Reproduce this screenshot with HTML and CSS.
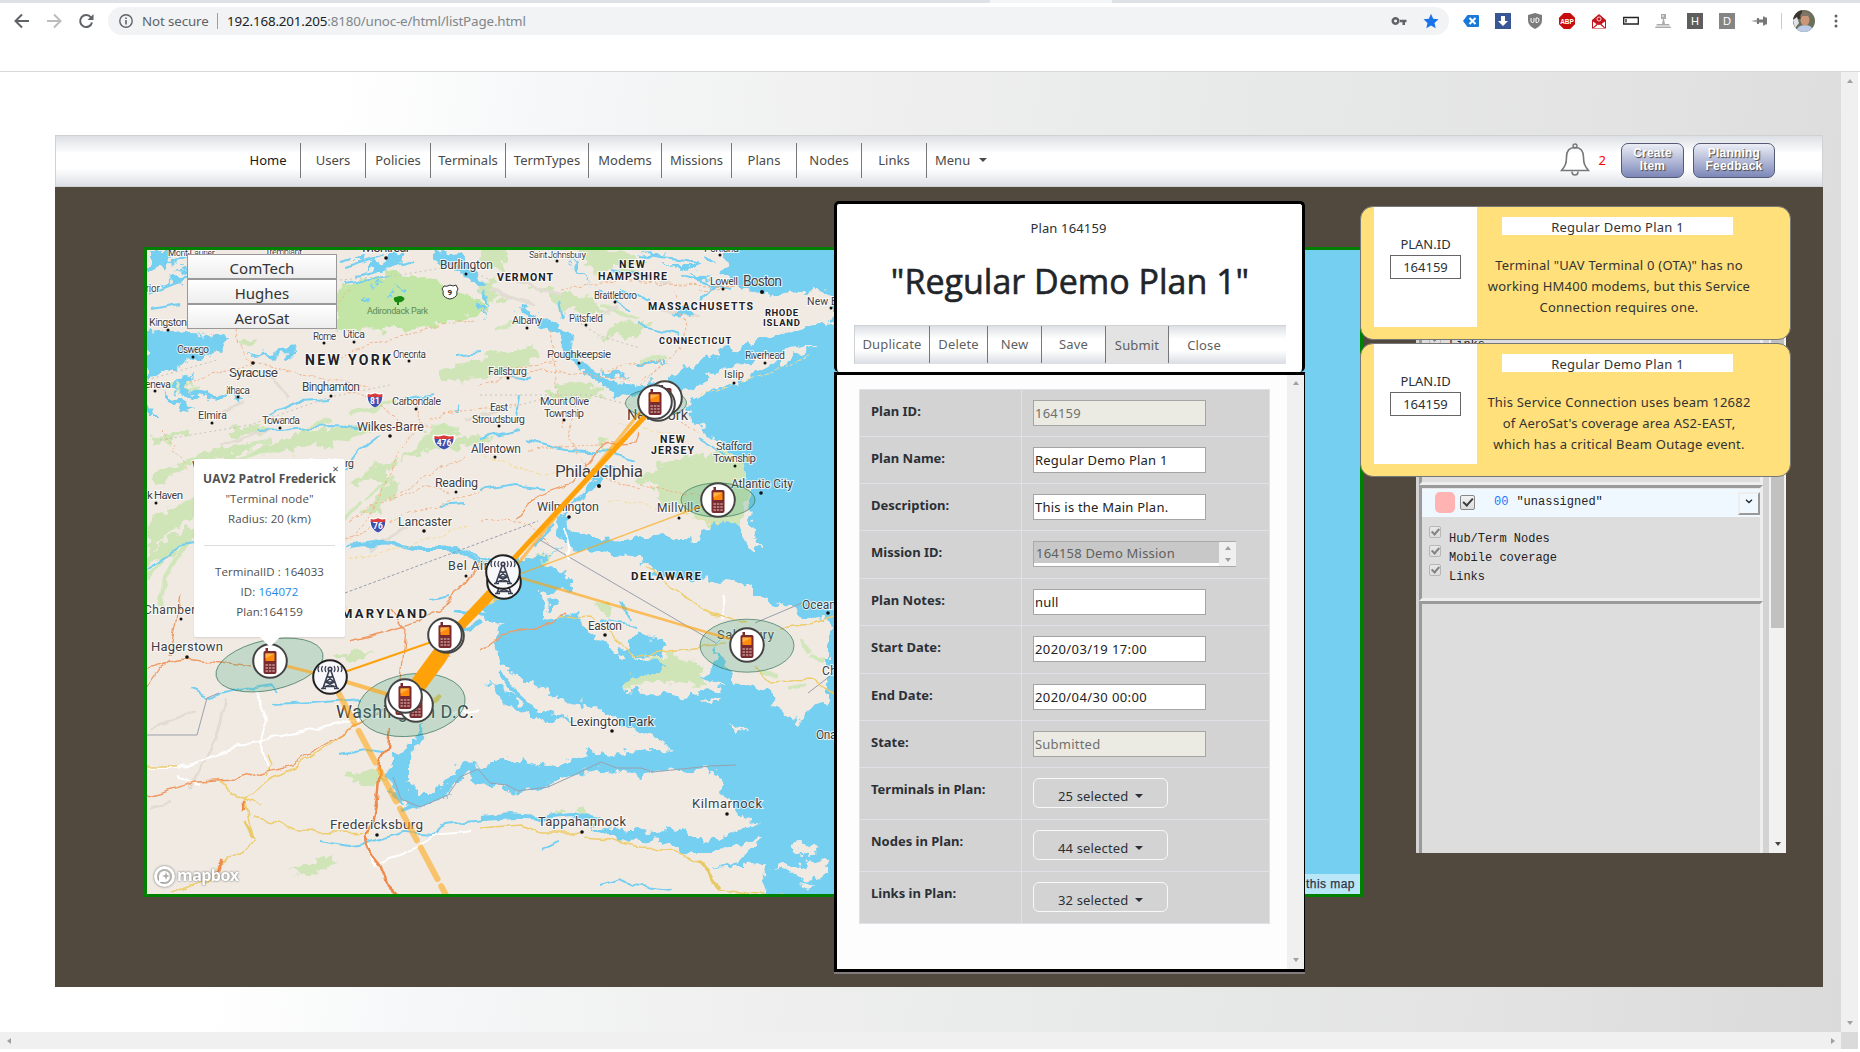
FILE: index.html
```html
<!DOCTYPE html>
<html lang="en">
<head>
<meta charset="utf-8">
<title>UNOC-E Plans</title>
<link rel="stylesheet" href="styles.css">
</head>
<body>
<header class="browser">
  <div class="tabstrip"><span class="tab-active"></span></div>
  <div class="toolbar">
    <svg class="tb-nav" width="108" height="28" viewBox="0 7 108 28" fill="none" stroke-width="2">
      <path d="M29 21H16M22 14.5L15.500 21l6.500 6.500" stroke="#5f6368"/>
      <path d="M47 21h13M54 14.500l6.500 6.500-6.500 6.500" stroke="#babcbe"/>
      <path d="M91 17.500a6 6 0 1 0 1 5" stroke="#5f6368"/><path d="M93.500 14v6h-6z" fill="#5f6368"/>
    </svg>
    <div class="omnibox">
      <svg width="14" height="14" viewBox="0 0 14 14"><circle cx="7" cy="7" r="6.200" fill="none" stroke="#5f6368" stroke-width="1.400"/><path d="M6.200 6h1.600v4.500H6.200zM6.200 3.500h1.600V5H6.200z" fill="#5f6368"/></svg>
      <span class="secure">Not secure</span><span class="vsep"></span>
      <span class="url"><b>192.168.201.205</b>:8180/unoc-e/html/listPage.html</span>
      <span class="omni-icons">
        <svg width="16" height="16" viewBox="0 0 16 16"><path fill="#5f6368" fill-rule="evenodd" d="M5 4a4 4 0 1 1-1 .01zM4.500 6.500a1.500 1.500 0 1 0 .1 0zM8 6.700h7.500v2.600H14V12h-2.500V9.300H8z"/></svg>
        <svg width="16" height="16" viewBox="0 0 16 16"><path fill="#1a73e8" d="M8 .8l2.200 5 5.300.5-4 3.600 1.200 5.300L8 12.400l-4.700 2.800 1.200-5.300-4-3.600 5.300-.5z"/></svg>
      </span>
    </div>
    <div class="extensions">
      <svg viewBox="0 0 16 16"><path fill="#1a79d8" d="M4.500 2H15q1 0 1 1v10q0 1-1 1H4.500L0 8z"/><path stroke="#fff" stroke-width="2" d="M6.500 5l6 6m0-6l-6 6"/></svg>
      <svg viewBox="0 0 16 16"><path fill="#3a5795" d="M0 0h16v16H0z"/><path fill="#fff" d="M6 3h4v5h3l-5 5-5-5h3z"/></svg>
      <svg viewBox="0 0 16 16"><path fill="#7b7b7b" d="M8 0l7 2v5q0 6-7 9-7-3-7-9V2z"/><path fill="none" stroke="#fff" d="M4 5v3q0 1.500 1.500 1.500T7 8V5M9 5v4.500h1.500Q12 9 12 7t-1.500-2z"/></svg>
      <svg viewBox="0 0 16 16"><path fill="#c70d0d" d="M4.800 0h6.400L16 4.800v6.400L11.200 16H4.800L0 11.200V4.800z"/><text x="8" y="11" class="abp">ABP</text></svg>
      <svg viewBox="0 0 16 16"><path fill="#c4161c" d="M8 1l7 6v8.500H1V7z"/><path fill="#fff" d="M2 8.500L5.500 11 2 14.500zM14 8.500L10.500 11l3.500 3.500zM7 11.500l1 .7 1-.7 4 3.500H3z"/><circle cx="8" cy="6" r="2" fill="none" stroke="#fff" stroke-width=".8"/></svg>
      <svg viewBox="0 0 16 16"><path fill="#fff" stroke="#222" stroke-width="1.300" d="M.7 4.500h14.600v6.500H.7zM3 6v3.500"/></svg>
      <svg viewBox="0 0 16 16"><path fill="#aaa" d="M6 1h5v5H9l1 5H7l1-5H6zM2 11h12l2 4H0z"/><path stroke="#fff" d="M1 13h14M7 3h2"/></svg>
      <i class="key">H</i>
      <i class="key light">D</i>
      <svg viewBox="0 0 16 16"><path fill="#aaa" d="M0 8l6-1.500v3z"/><path fill="#777" d="M6 5h2v1.500h4V3.500h1.500l.5 1h2v7h-2l-.5 1H12v-3H8V11H6z"/></svg>
    </div>
    <span class="vsep tall"></span>
    <svg class="avatar" width="22" height="22" viewBox="0 0 22 22"><defs><clipPath id="av"><circle cx="11" cy="11" r="11"/></clipPath></defs><g clip-path="url(#av)"><path fill="#6b6f5c" d="M0 0h22v22H0z"/><path fill="#3b352d" d="M0 0h9v9H0z"/><path fill="#b9cbe6" d="M3 22q1-7 9-7t8 7z"/><ellipse cx="12" cy="10" rx="4.500" ry="5.500" fill="#c99678"/><path fill="#83746a" d="M7 8q0-6 5-6t5 6l-2-2H9z"/><path fill="#dfe2e8" d="M0 10l4-3 2 6-4 5z"/></g></svg>
    <svg class="dots" width="4" height="14" viewBox="0 0 4 14" fill="#5f6368"><circle cx="2" cy="2" r="1.500"/><circle cx="2" cy="7" r="1.500"/><circle cx="2" cy="12" r="1.500"/></svg>
  </div>
</header>

<div class="viewport">
<main class="page">
  <nav class="navbar">
    <ul class="nav-items">
      <li class="active w64">Home</li><li class="w65">Users</li><li class="w65">Policies</li><li class="w75">Terminals</li><li class="w83">TermTypes</li><li class="w73">Modems</li><li class="w70">Missions</li><li class="w65">Plans</li><li class="w65">Nodes</li><li class="w65">Links</li><li class="menu">Menu <span class="caret"></span></li>
    </ul>
    <div class="nav-right">
      <svg width="30" height="34" viewBox="0 0 30 34" fill="none" stroke="#777" stroke-width="1.600"><path d="M15 4.500c-6 0-8.500 4-8.500 9.500 0 7-1.500 9-5 13.500h27c-3.500-4.500-5-6.500-5-13.500 0-5.500-2.500-9.500-8.500-9.500z"/><circle cx="15" cy="3" r="2" stroke-width="1.400"/><path d="M12 28.500q0 3.500 3 3.500t3-3.500"/></svg>
      <span class="alert-count">2</span>
      <button class="pill create">Create<br>Item</button>
      <button class="pill planning">Planning<br>Feedback</button>
    </div>
  </nav>

  <section class="workspace">
    <div class="map">
      <svg class="map-canvas" width="1213" height="644" viewBox="147 250 1213 644">
        <defs>
          <filter id="rough" x="-5%" y="-5%" width="110%" height="110%"><feTurbulence type="fractalNoise" baseFrequency=".09" numOctaves="3" seed="4"/><feDisplacementMap in="SourceGraphic" scale="17" xChannelSelector="R" yChannelSelector="G"/></filter>
          <filter id="wiggle" x="-5%" y="-5%" width="110%" height="110%"><feTurbulence type="fractalNoise" baseFrequency=".06" numOctaves="2" seed="9"/><feDisplacementMap in="SourceGraphic" scale="9" xChannelSelector="R" yChannelSelector="G"/></filter>
          <g id="phone"><circle r="16.800" fill="#fff" stroke="#444" stroke-width="2"/><path fill="#7a2b2f" d="M-4.500-13h2.500v3h7q1.500 0 1.500 1.500V11q0 2-2 2h-9q-2 0-2-2V-8.500q0-1.500 1.500-1.500h.5z"/><path fill="#ff8a0c" d="M-4.500-7.500h9v7.500h-9z"/><path fill="#ffb347" d="M-4.500-7.500h9l-9 5z"/><path stroke="#e9d0cf" stroke-width="1.200" stroke-dasharray="2.400 1" d="M-4.500 4h9.500M-4.500 7h9.500M-4.500 10h9.500"/></g>
          <g id="tower"><circle r="16.800" fill="#f8f8fb" stroke="#222" stroke-width="2"/><g fill="none" stroke="#3a4052" stroke-width="1.600"><path d="M-1-6L-7 11M1-6l6 17M-3 0h6M-4.500 5h9M-6 9.500H6M-2.500-1L4 5M2.500-1L-4 5M-4 5l9 5M4 5l-9 5M-9 11.500h5M4 11.500h5"/><circle cy="-8" r="1.800"/><path stroke-width="1.200" d="M-4-11q-2 3 0 6M-7.500-11q-2 3 0 6M-11-11q-2 3 0 6M4-11q2 3 0 6M7.500-11q2 3 0 6M11-11q2 3 0 6"/></g></g>
          <g id="shield"><path fill="#fff" d="M-8.500-7.500q4 1.500 8.500-.5 4.500 2 8.500.5 2 10-8.500 15.500-10.500-5.500-8.500-15.500z"/><path fill="#3f4fae" d="M-7.300-3h14.600q0 7-7.300 10.500-7.300-3.500-7.300-10.500z"/><path fill="#d83c3c" d="M-7.300-6q4 1.200 7.300-.7 3.300 1.900 7.300.7l.2 3h-15z"/></g>
        </defs>
        <path fill="#f0eae3" d="M147 250h1213v644H147z"/>
        <!-- hills, parks and woods -->
        <g fill="#cfe5b7" filter="url(#rough)">
          <path fill="#c3e5a6" d="M335 290l30-10 35-8 40 10 40 18 8 12-40 10-45 8-65 1-5-25z"/>
          <path d="M440 372l50-18 45-10-2 20-30 12-60 5zM480 355l50-10 10 8-40 15zM545 395l20-12 40 5-5 10-40 4zM600 335l20-14 35 2-22 14zM530 285l60 12 20 20-50-8zM575 250l50 0 20 12-50 10zM480 250h25v20h-15zM475 282l15-2 15 18-20 8z"/>
          <path d="M150 520l55-28 15 5-40 28-33 30zM147 555l40-28 15 4-30 25-25 10zM180 465l25-15 40-5 5 7-45 12zM250 452l50-20 45-6 5 7-60 20zM300 440l70-18 10 6-60 20zM150 440l35-12 6 5-40 15z"/>
          <path d="M350 485l30-22 20-6-15 22zM360 515l30-35 10 3-20 28zM400 460l30-30 15-8 15 12-35 18zM440 445l40-12 10 6-35 12zM230 430l30-5 15 5-40 8zM150 475l40-12-35 25z"/>
          <path d="M640 475l40-18 50-8 15 15 3 35-10 25-25 4-15-13-40-13 5-10-25-10zM330 655l28-4 15 3-25 5zM235 340l12-3 10 5-15 3zM345 775l30-5 12 8-18 8zM290 872l40-18 5 8-25 14zM600 683l30-20 40-8 30 10 2 22-35-5-50 6zM723 692l17-12 6 9-17 12zM597 606l10-7 6 10-7 6z"/>
          <path d="M595 440l12-5-4 15zM535 555h15l-5 12zM755 570l10 2-5 5zM165 380l35 4-20 6zM620 550l30 2-15 5zM575 810l12-4-2 12zM555 812h12l-4 8z"/>
        </g>
        <g filter="url(#wiggle)" stroke="#cbe6b3" stroke-width="4" fill="none" opacity=".8"><path d="M160 605q5-40 35-70M147 580l25-35M180 395l20-6M240 448l30-7M280 600l25-20M235 460l40-12M350 415l45-14M300 430l30-10M365 500l30-25M330 535l30-35M430 425l30 5M290 300l-20 5M495 330l20-8M600 305l40 15M640 360l25-3M620 268l30 12M800 640l10 12M790 690l15-4M760 672l18 2M810 655l15 4M735 630l10 3"/></g>
        <g filter="url(#wiggle)" stroke="#e2dcd2" stroke-width="3" fill="none"><path d="M200 420l45-16M220 445l50-15M290 400l-20-25M490 290l45 15M500 275l60 20M590 320l30-12M465 420l40-12M370 550l40-26M210 520l70-30M190 790l25-50 10-40M150 730l45-20M150 810l22-8M640 275l30 8M660 310l40 6"/></g>
        <!-- water -->
        <g fill="#75cff0" filter="url(#rough)">
          <path d="M718 240l10 22-5 10 12 10 18 12 30-2 32-2 25 6V240z"/>
          <path d="M845 319l-32 6-13 3-20 7-20 5-27 8-20 7-20 10-17 10-18 15 5 4 25-4 22-14 30-11 35-12 38-7h25z"/>
          <path d="M660 388l-25 10-20-4-22-14-10-10-18-12-4-25-22-9-16-12-10-5 14 3 22 10 20 12 6 25 22 14 16 12 22 2 15-5z"/>
          <path d="M1370 240H834v100l-29 12-25 10-20 10-30 13-30 10-15 10 8 15 12 13 20 10 10 12 10 10 2 15 3 20 3 25 2 15 5 8h-10l-5-9-10-15-10-3-13 5-14 13-30-3-47 2-23 1-17-5-13-5-2-11 19-24 30-26-5-2-32 28-20 30-2 12 20 12 23 5 40 5 14 8-2 9 35 5 30 1 23 3 17 9 23 10 20 10 30 10v120h6v185h530z"/>
          <path d="M563 573l-20-8 5-12 40-15-50 20-18-2-16 15-5 25-12 10-4 12 18 8-8 17 7 20 17 14 23 6 20 17 43 8 10 12 17 10 27 7 16 14-26-3-34 9-23-5-37 15-40-7-33 7-23-5-7 17-13 13h-20l-10-10v-20l13-20 7-20-12 8-2 12-17 13-10 24 10 20 20 10 27-10 13-17 13-10 10 12 24 2 10 7 30-4 20-10 33-13 13 6 24 3 56-5 27-1 7 23 10 17 23 15-17 5-33 13-30-13-27 3-26-3-37-4 30 15 47 2 26 10h34l43-17-23 24-34 8 54-3 3 18-2 22h100V700l-54 7-10 16-13-10-14-6-3-17-23-6-14-2-10-19-6-20-3 25-14 9 23 11-23 5-20 4-23-4-34-5 10-11 34-10-39-12 29 2 10-10-4-9-20-3-15 4-8 18-17-14-20-16-3-14-37 5-1-25 28-3z"/>
          <path d="M488 684l18 18 18 12 25 8 25-3-25-6-25-6-20-20zM560 605l-8-10-6 15zM490 765l35-8 10 5-25 6z"/>
          <path d="M147 332l35-3 45 10-5 12-30 10-30 12-15 8zM147 250h25l-5 15-20 8zM170 278l20-5-10 12zM247 356l50-8-5 7-45 2zM190 375l-5 15 35 5 35 1-40 3-35-5-5-12zM160 392l12 4 18 10 3 6-22-8zM147 405l8 8-8 0zM780 894l20-10 20 10z"/>
          <path d="M735 260l30-5 10 12-20 4zM385 254h25l-20 15-25 4zM430 250l30 5 10 15 15 14h-14l-12-14-20-5zM480 290l8 6-3 12zM473 300l8 5 4 15zM670 313l20-5 3 7-20 3zM565 255l15 12 10 18 8 10-12-16zM455 410l8-5-4 10zM600 370l30 6-20 3zM640 358l30 5-30 2z"/>
          <path d="M150 252h30l-8 5zM160 262l28-3-6 5zM175 270l14-4-4 6zM155 285l20-4-8 6zM350 262l16-6-4 6zM360 300l8-2-3 6zM385 295l10-3-4 6zM372 285l12-4-6 6zM398 288l8-4-2 6zM640 254l26-2-10 5zM660 264l40 0-14 4zM690 276l24 2-14 3zM700 258l18 6-12 2z"/>
        </g>
        <g filter="url(#wiggle)" stroke="#75cff0" stroke-width="2" fill="none">
          <path d="M345 268l40-12M355 275l60-15M150 295l30-12M150 310l30-5M345 283l45-8M270 415l30-14 30-2M260 430l70-4 30 2M345 470l15-20 20-15M147 570l35-25 30-5M345 545l30-4 40 8 40-2 40 15M340 262l10-3M480 438l40-8M520 395l-4 30M525 440l40 10 50 2 20 7M480 490l35-6 30 4M190 690l20 8 30-8 30-6 8 10M272 705l40-2 50-4M320 840l30 5 20-3 35-10 30 2 10-10 40-4 60-4"/>
          <path d="M610 270l40 8M640 255l60 8M680 275l50 15M600 290l30 20M720 280l-20 20M650 300l-30-10M560 300l4 18M405 400l30-6M440 505l25-2M340 755l25-5 20 2M430 600l20-4M565 570l-30 25M620 600l10 20M600 620l35 6M800 580l20 12M540 850l20-8M600 885l20-6 12 6 40 4M510 375l20 4M455 355l25-3M640 325l40 10M555 525l-20 20M700 440l25 15"/>
          <path stroke-width="4" d="M350 547l40-5 30 7 35 0 35 16M540 568l-20 20M600 820l-30-6-30 4-30-2-30 2M455 610l30 4 20-6M462 630l20-8M405 797l10 8-15 6M500 672l15 20 20 18"/>
        </g>
        <g fill="#f0eae3" filter="url(#rough)"><path d="M773 870l10-5 20 2 10-10 12 5 4 14-20 4-15-6zM790 850l8-10 20 10-10 8zM700 700l20-1-4 6zM730 725l16 4-6 5zM800 880l15 5-10 4zM715 712l10 5z"/></g>
        <!-- borders and roads -->
        <path fill="none" stroke="#9aa0ad" stroke-width="1" d="M540 540L716 643M755 623l47-20M147 735h50l10-37 12-5M393 777l8 22 19 8 28-12 12-18 18-8 12 14 17 2 11 6 30-4 22-10 31-15 16 6h24l12 4 57-6 26-1M808 693l26-20"/>
        <path fill="none" stroke="#9aa0ad" stroke-width="1" stroke-dasharray="3 2" d="M345 593l145-54 48-18"/>
        <path fill="none" stroke="#c9c3bd" stroke-dasharray="2 3" d="M160 440l90-15 80-28 60-12M340 280l60-5 60-10 30 15M147 380l70-20M640 385l20-18M560 310l40 26 40 12M480 395h110l40 10M500 410l50-13"/>
        <g filter="url(#wiggle)" fill="none">
          <path stroke="#fff" stroke-width="2" d="M147 768h30l70-25 70-14 90-20M255 690l12 30-8 22 10 25M175 775l25 10M370 845l4 20 30-10 30-20 40-4M565 530l5 30M720 620l5-25M480 710l-40 5"/>
          <path stroke="#edcd6e" stroke-width="1.500" d="M147 767h30M170 893l40-15M245 797l20-15 30-15 55-38 15-8M245 797l5 25 5 18-10 10-28 18-12 18M253 818l25 5 22 8 70 2M218 780l10 5 2 10 15 2M245 797l15 10M268 755l5 10-5 10M645 565l25 22 40 27 38 10M560 618l30-2 25 22 20 20 40-8 50-5M753 665l15 16 45-2 21 16M480 828l40-3 20 8h40M584 838l25 2 30 8 25 1 35 12 5 2 13 26 28 4 40 2M780 627l30-4 24-7M480 605l30-10"/>
          <path stroke="#e8c860" stroke-width="3" d="M700 861l18 27M418 710l25-15M245 820l8 18"/>
          <path stroke="#ef9a63" stroke-width="1.300" d="M147 796l50-14 40-2 55-15 30-20 50-28 15-10M147 668l35-10 40 4 30 4M170 655l10-60M147 687l12-18 12-10M350 640l40-10 30-8 25-18 20-20 20-25M480 650l20-15 35-8 20-5 10-10M400 680l5-50-15-20M405 720l25-15M420 670l20-10 10-5M460 590l20-30M640 433l-3 10-35 2-30 38-35 12-20 25"/>
          <path stroke="#ef8a4e" stroke-width="2.500" d="M390 727l-2 20-8 15-2 30-6 30-8 15 8 18 8 10 8 20 14 14M215 873l8-12M245 800v10"/>
          <path stroke="#f2b48a" stroke-width="1" stroke-dasharray="3 2" d="M235 330l10 25 8 10-40 8-25 10M250 360l50 15 40 5 30 8M325 365l40-20 50-12 60-15M350 290l-30 40M160 430l15 15-5 8 20 14M345 390l30 10 30 25 25 0M415 400l5 25-20 25-25 60-25 30M350 520l55-30 60-35M390 500l40-15 20 10M345 540l60-25 80-25M430 420l30-10 60-5M550 330l5 40 10 60M480 385l60-15 90 10M640 380l40-30 5-20-10-40M700 290l50-4M560 290l60-10 60 5 60 2M600 370l60-10M490 370l70-7M530 450l90-8M480 520l50 4 20 20M575 400l-8 40 25 30M680 420l20 15M640 485l70 12M580 470l60 20"/>
          <path stroke="#f4dc9c" stroke-width="1" stroke-dasharray="4 2" d="M480 455l60 20 50-4M350 560l60-15 60-20M700 395l60-20 50-18M620 425l60 10M330 590l15 10 5 20M610 500l60 10 50 15"/>
        </g>
        <!-- city names -->
        <g class="city">
          <g fill="#111"><circle cx="386" cy="258" r="1.800"/><circle cx="466" cy="274" r="1.500"/><circle cx="168" cy="330" r="1.500"/><circle cx="193" cy="357" r="1.500"/><circle cx="253" cy="363" r="1.800"/><circle cx="324" cy="343" r="1.500"/><circle cx="354" cy="342" r="1.500"/><circle cx="409" cy="361" r="1.500"/><circle cx="155" cy="391" r="1.500"/><circle cx="238" cy="397" r="1.500"/><circle cx="331" cy="396" r="1.500"/><circle cx="416" cy="409" r="1.500"/><circle cx="212" cy="423" r="1.500"/><circle cx="280" cy="428" r="1.500"/><circle cx="390" cy="436" r="1.800"/><circle cx="156" cy="503" r="1.500"/><circle cx="456" cy="492" r="1.500"/><circle cx="424" cy="531" r="1.800"/><circle cx="466" cy="576" r="1.500"/><circle cx="181" cy="619" r="1.500"/><circle cx="187" cy="657" r="1.800"/><circle cx="377" cy="835" r="1.800"/><circle cx="557" cy="261" r="1.500"/><circle cx="615" cy="302" r="1.500"/><circle cx="527" cy="328" r="1.500"/><circle cx="586" cy="325" r="1.500"/><circle cx="723" cy="289" r="1.500"/><circle cx="762" cy="292" r="2"/><circle cx="831" cy="308" r="1.500"/><circle cx="720" cy="255" r="1.500"/><circle cx="579" cy="363" r="1.500"/><circle cx="765" cy="363" r="1.500"/><circle cx="734" cy="383" r="1.500"/><circle cx="508" cy="378" r="1.500"/><circle cx="564" cy="420" r="1.500"/><circle cx="499" cy="426" r="1.500"/><circle cx="495" cy="457" r="1.500"/><circle cx="599" cy="486" r="2"/><circle cx="569" cy="517" r="1.800"/><circle cx="735" cy="466" r="1.500"/><circle cx="761" cy="493" r="1.800"/><circle cx="679" cy="518" r="1.500"/><circle cx="605" cy="635" r="1.800"/><circle cx="612" cy="731" r="1.800"/><circle cx="828" cy="613" r="1.800"/><circle cx="727" cy="814" r="1.800"/><circle cx="582" cy="832" r="1.800"/></g>
          <text x="168" y="256" font-size="9.500" textLength="47">Mont-Laurier</text><text x="265" y="255" font-size="9.500" textLength="37">Tremblant</text><text x="362" y="252" font-size="14" textLength="47">Montréal</text>
          <text x="440" y="269" font-size="12" textLength="53">Burlington</text><text x="124" y="292" font-size="10" textLength="36">Superior</text><text x="149" y="326" font-size="11" textLength="38">Kingston</text>
          <text x="177" y="353" font-size="10.500" textLength="32">Oswego</text><text x="229" y="377" font-size="13.500" textLength="49">Syracuse</text><text x="313" y="340" font-size="10" textLength="23">Rome</text><text x="343" y="338" font-size="11" textLength="22">Utica</text><text x="393" y="358" font-size="10" textLength="33">Oneonta</text>
          <text x="138" y="388" font-size="11" textLength="33">Geneva</text><text x="226" y="394" font-size="10.500" textLength="24">Ithaca</text><text x="302" y="391" font-size="12" textLength="58">Binghamton</text><text x="392" y="405" font-size="11" textLength="49">Carbondale</text><text x="198" y="419" font-size="11" textLength="29">Elmira</text><text x="262" y="424" font-size="11" textLength="38">Towanda</text><text x="357" y="431" font-size="12.500" textLength="67">Wilkes-Barre</text>
          <text x="147" y="499" font-size="11.500" textLength="36">k Haven</text><text x="192" y="470" font-size="12.500" textLength="63">Williamsport</text><text x="310" y="467" font-size="11" textLength="44">Lewisburg</text><text x="435" y="487" font-size="12.500" textLength="43">Reading</text><text x="398" y="526" font-size="12.500" textLength="54">Lancaster</text><text x="448" y="570" font-size="12.500" textLength="40">Bel Air</text>
          <text x="144" y="614" font-size="12" textLength="84">Chambersburg</text><text x="151" y="651" font-size="13" textLength="72">Hagerstown</text><text x="336" y="718" font-size="18" textLength="138">Washington D.C.</text><text x="330" y="829" font-size="13.500" textLength="93">Fredericksburg</text>
          <text x="529" y="258" font-size="9.500" textLength="57">Saint Johnsbury</text><text x="704" y="252" font-size="11" textLength="35">Portland</text><text x="594" y="299" font-size="10" textLength="43">Brattleboro</text><text x="512" y="324" font-size="11" textLength="30">Albany</text><text x="569" y="322" font-size="10" textLength="34">Pittsfield</text><text x="710" y="285" font-size="11" textLength="28">Lowell</text><text x="743" y="286" font-size="14" textLength="39">Boston</text><text x="807" y="305" font-size="10.500" textLength="62">New Bedford</text>
          <text x="547" y="358" font-size="11.500" textLength="64">Poughkeepsie</text><text x="745" y="359" font-size="10.500" textLength="40">Riverhead</text><text x="724" y="378" font-size="11" textLength="20">Islip</text><text x="488" y="375" font-size="11" textLength="39">Fallsburg</text><text x="540" y="405" font-size="11" textLength="49">Mount Olive</text><text x="544" y="417" font-size="11" textLength="40">Township</text><text x="490" y="411" font-size="11" textLength="18">East</text><text x="472" y="423" font-size="11" textLength="53">Stroudsburg</text><text x="471" y="453" font-size="12" textLength="50">Allentown</text>
          <text x="627" y="420" font-size="14.500" textLength="61">New York</text><text x="555" y="477" font-size="17" textLength="88">Philadelphia</text><text x="716" y="450" font-size="11.500" textLength="36">Stafford</text><text x="713" y="462" font-size="11.500" textLength="43">Township</text><text x="731" y="488" font-size="12" textLength="62">Atlantic City</text><text x="537" y="511" font-size="12.500" textLength="62">Wilmington</text><text x="657" y="512" font-size="12" textLength="43">Millville</text>
          <text x="588" y="630" font-size="12" textLength="34">Easton</text><text x="717" y="639" font-size="13" textLength="57">Salisbury</text><text x="802" y="609" font-size="12" textLength="57">Ocean City</text><text x="822" y="675" font-size="12" textLength="78">Chincoteague</text><text x="816" y="739" font-size="12" textLength="50">Onancock</text><text x="570" y="726" font-size="13" textLength="84">Lexington Park</text><text x="692" y="808" font-size="13" textLength="70">Kilmarnock</text><text x="538" y="826" font-size="13" textLength="88">Tappahannock</text>
        </g>
        <g class="state">
          <text x="305" y="365" font-size="14" textLength="86">NEW YORK</text><text x="497" y="281" font-size="10.500" textLength="56">VERMONT</text><text x="619" y="268" font-size="10.500" textLength="26">NEW</text><text x="598" y="280" font-size="10.500" textLength="69">HAMPSHIRE</text><text x="648" y="310" font-size="10.500" textLength="105">MASSACHUSETTS</text><text x="765" y="316" font-size="9.500" textLength="33">RHODE</text><text x="763" y="326" font-size="9.500" textLength="37">ISLAND</text><text x="659" y="344" font-size="9" textLength="72">CONNECTICUT</text><text x="660" y="443" font-size="10.500" textLength="25">NEW</text><text x="651" y="454" font-size="10.500" textLength="43">JERSEY</text><text x="631" y="580" font-size="11.500" textLength="70">DELAWARE</text><text x="341" y="618" font-size="13" textLength="86">MARYLAND</text>
        </g>
        <text class="park" x="367" y="314" font-size="9" textLength="61">Adirondack Park</text>
        <path fill="#188a12" d="M394 300q-1-3 2-3 5-2 7 0 3 1 0 4-3 2-4 1v3h-2v-3q-2 1-3-2z"/>
        <path fill="#fff" stroke="#333" d="M444 286q3 1 6-1 3 2 6 0l2 4q-2 3-1 5-1 4-7 5-6-1-7-5 1-3-1-5z"/><text class="park num" x="447.500" y="294.500" font-size="8">9</text>
        <use href="#shield" x="375" y="400"/><use href="#shield" transform="translate(444 442) scale(1.300 1)"/><use href="#shield" x="378" y="525"/>
        <g class="route"><text x="375" y="404">81</text><text x="444" y="446">476</text><text x="378" y="529">76</text></g>
        <!-- coverage areas and plan links -->
        <g fill="#4bab84" fill-opacity=".26" stroke="#2a6b50" stroke-opacity=".7" stroke-width=".9">
          <ellipse cx="269.500" cy="665" rx="54.500" ry="25" transform="rotate(-12 269.500 665)"/><ellipse cx="411.500" cy="705" rx="54" ry="31" transform="rotate(-8 411.500 705)"/><ellipse cx="747" cy="645.700" rx="47" ry="26.500"/><ellipse cx="718" cy="500" rx="37" ry="17"/><ellipse cx="656" cy="403" rx="30.500" ry="14"/>
        </g>
        <g stroke="#ffa20a" fill="none">
          <path stroke-width="5" d="M649 412L507 566"/><path stroke-width="3" opacity=".6" d="M641 411L512 571"/><path fill="#ffa20a" stroke="none" d="M495 582l8 7-41 42-16 30-22 30-12-12 28-38z"/>
          <path stroke-width="2" d="M330 677l116-40"/><g opacity=".62"><path stroke-width="3" d="M270 662l60 15"/><path stroke-width="4" d="M330 677l80 24"/><path stroke-width="1.500" d="M504 580l214-80"/><path stroke-width="2.500" d="M504 573l243 71"/></g>
          <path stroke-width="6" opacity=".55" stroke-linecap="round" stroke-dasharray="36 8" d="M338 692l109 205"/>
        </g>
        <use href="#phone" x="665" y="398"/><use href="#phone" x="658" y="404"/><use href="#phone" x="655" y="402"/><use href="#phone" x="718" y="500"/>
        <use href="#tower" x="504" y="582"/><use href="#tower" x="503" y="572"/><use href="#tower" x="330" y="677"/>
        <use href="#phone" x="447" y="636"/><use href="#phone" x="445" y="635"/><use href="#phone" x="402" y="702"/><use href="#phone" x="416" y="705"/><use href="#phone" x="405" y="696"/><use href="#phone" x="270" y="661"/><use href="#phone" x="747" y="645"/>
        <g class="logo"><circle cx="164.500" cy="876.500" r="9" fill="none" stroke="#fff" stroke-width="3"/><path fill="#fff" d="M159 882v-6a5.500 5.500 0 1 1 5.500 6z"/><path fill="#aaa" d="M166 872l1 3 3 1-3 1-1 3-1-3-3-1 3-1z"/><text x="177" y="881" textLength="62">mapbox</text></g>
      </svg>
      <div class="vendors"><button>ComTech</button><button>Hughes</button><button>AeroSat</button></div>
      <div class="popup">
        <span class="popup-close">×</span>
        <strong>UAV2 Patrol Frederick</strong><span>"Terminal node"</span><span>Radius: 20 (km)</span>
        <hr>
        <span>TerminalID : 164033</span><span>ID: <a>164072</a></span><span>Plan:164159</span>
      </div>
      <div class="attribution">this map</div>
    </div>

    <aside class="layers">
      <div class="layer-list">
        <div class="layer first"><p><i class="check off"></i>Links</p></div>
        <div class="layer"></div>
        <div class="layer"><div class="layer-head"><span class="swatch"></span><i class="check"></i><a>00</a><span>"unassigned"</span><span class="expand"><svg width="8" height="5" viewBox="0 0 8 5"><path d="M1 .8l3 2.800L7 .8" fill="none" stroke="#222" stroke-width="1.300"/></svg></span></div><p><i class="check off"></i>Hub/Term Nodes</p><p><i class="check off"></i>Mobile coverage</p><p><i class="check off"></i>Links</p></div>
        <div class="layer rest"></div>
      </div>
      <div class="layer-scroll"><span class="thumb"></span><span class="arrow down dark"></span></div>
    </aside>

    <div class="modal">
      <div class="modal-head">
        <div class="plan-no">Plan 164159</div>
        <h1>"Regular Demo Plan 1"</h1>
        <div class="actions"><span class="a1">Duplicate</span><span class="a2">Delete</span><span class="a3">New</span><span class="a4">Save</span><span class="a5">Submit</span><span class="a6">Close</span></div>
      </div>
      <div class="modal-body">
        <div class="form-wrap">
          <table>
            <tr><th>Plan ID:</th><td><div class="field disabled">164159</div></td></tr>
            <tr><th>Plan Name:</th><td><div class="field">Regular Demo Plan 1</div></td></tr>
            <tr><th>Description:</th><td><div class="field">This is the Main Plan.</div></td></tr>
            <tr class="r48"><th>Mission ID:</th><td><div class="listbox"><span>164158 Demo Mission</span><div class="list-scroll"><i class="arrow up"></i><i class="arrow down"></i></div></div></td></tr>
            <tr><th>Plan Notes:</th><td><div class="field">null</div></td></tr>
            <tr class="r48"><th>Start Date:</th><td><div class="field date">2020/03/19 17:00</div></td></tr>
            <tr><th>End Date:</th><td><div class="field date">2020/04/30 00:00</div></td></tr>
            <tr><th>State:</th><td><div class="field disabled">Submitted</div></td></tr>
            <tr class="r52"><th>Terminals in Plan:</th><td><div class="multi">25 selected <span class="caret"></span></div></td></tr>
            <tr class="r52"><th>Nodes in Plan:</th><td><div class="multi">44 selected <span class="caret"></span></div></td></tr>
            <tr class="r52"><th>Links in Plan:</th><td><div class="multi">32 selected <span class="caret"></span></div></td></tr>
          </table>
        </div>
        <div class="body-scroll"><i class="arrow up"></i><i class="arrow down"></i></div>
      </div>
    </div>

    <div class="toasts">
      <div class="toast"><div class="toast-id"><span>PLAN.ID</span><b>164159</b></div><div class="toast-text"><div class="toast-title">Regular Demo Plan 1</div><p>Terminal "UAV Terminal 0 (OTA)" has no<br>working HM400 modems, but this Service<br>Connection requires one.</p></div></div>
      <div class="toast"><div class="toast-id"><span>PLAN.ID</span><b>164159</b></div><div class="toast-text"><div class="toast-title">Regular Demo Plan 1</div><p>This Service Connection uses beam 12682<br>of AeroSat's coverage area AS2-EAST,<br>which has a critical Beam Outage event.</p></div></div>
    </div>
  </section>
</main>
<div class="vscroll"><i class="arrow up"></i><i class="arrow down"></i></div>
</div>
<div class="hscroll"><i class="arrow left"></i><i class="arrow right"></i></div>
</body>
</html>
```
FILE: styles.css
```css
* { box-sizing: border-box; }
body { margin: 0; width: 1860px; height: 1052px; overflow: hidden; display: flex; flex-direction: column; background: #fff; font-family: "Noto Sans", "Open Sans", sans-serif; font-size: 13px; color: #2b3036; }
p, h1, ul { margin: 0; padding: 0; }
button { font: inherit; padding: 0; }

/* browser chrome */
.browser { height: 72px; border-bottom: 1px solid #d5d8d8; }
.tabstrip { height: 3px; background: #dee1e6; display: flex; }
.tab-active { width: 122px; height: 3px; margin-left: 990px; background: #f4f5f7; }
.toolbar { display: flex; align-items: center; height: 28px; margin-top: 4px; }
.omnibox { width: 1341px; height: 28px; border-radius: 14px; background: #f1f3f4; display: flex; align-items: center; padding-left: 11px; font-size: 14px; color: #5f6368; }
.secure { margin-left: 9px; width: 67px; white-space: nowrap; font-size: 13.3px; letter-spacing: -.1px; }
.vsep { width: 1px; height: 16px; background: #9aa0a6; margin: 0 9px 0 8px; }
.url { font-size: 13.4px; letter-spacing: -.16px; color: #80868b; white-space: nowrap; }
.url b { font-weight: 400; color: #202124; }
.omni-icons { margin-left: auto; display: flex; gap: 16px; padding-right: 10px; }
.extensions { display: flex; gap: 16px; margin-left: 14px; }
.extensions svg, .extensions .key { width: 16px; height: 16px; }
.abp { font: bold 6.5px "Liberation Sans", sans-serif; fill: #fff; text-anchor: middle; }
.key { background: #5e5e5e; color: #fff; font: 11px/16px "Liberation Sans", sans-serif; text-align: center; }
.key.light { background: #858585; }
.vsep.tall { margin: 0 11px 0 14px; background: #c8cbcf; }
.dots { margin-left: 19px; }

/* page frame */
.viewport { display: flex; height: 960px; }
.page { width: 1841px; padding: 63px 18px 45px 55px; background: linear-gradient(98deg, #fff 0, #fff 17%, #f6f7f8 28%, #efefef 45%, #e8e9e9 62%, #e3e3e3 82%, #dadada 100%); }
.vscroll { width: 17px; background: #f0f0f0; display: flex; flex-direction: column; justify-content: space-between; align-items: center; padding: 7px 0; }
.hscroll { height: 17px; width: 1858px; display: flex; justify-content: space-between; align-items: center; padding: 0 23px 0 7px; background: linear-gradient(90deg, #f0f0f0 1841px, #dadada 1841px); }
.arrow { width: 0; height: 0; border: 3.5px solid transparent; }
.arrow.up { border-top: 0; border-bottom: 4px solid #a0a0a0; }
.arrow.down { border-bottom: 0; border-top: 4px solid #a0a0a0; }
.arrow.left { border-left: 0; border-right: 4px solid #a0a0a0; }
.arrow.right { border-right: 0; border-left: 4px solid #a0a0a0; }
.arrow.dark { border-top-color: #444; }
.caret { display: inline-block; border: 4px solid transparent; border-top-color: currentColor; border-bottom: 0; vertical-align: 3px; margin-left: 4px; }

/* navigation */
.navbar { height: 52px; border: 1px solid #cfd2d4; background: linear-gradient(#dce0e5 0, #fff 35%, #fff 65%, #dce0e5 100%); display: flex; justify-content: space-between; padding-left: 180px; color: #4a4a4a; }
.nav-items { display: flex; list-style: none; padding-top: 7px; }
.nav-items li { height: 35px; line-height: 35px; text-align: center; border-right: 1px solid #777; }
.nav-items .active { color: #1a1a1a; }
.nav-items .menu { border: 0; padding-left: 8px; }
.menu .caret { margin-left: 5px; }
.w64 { width: 65px; } .w65 { width: 65px; } .w75 { width: 75px; } .w83 { width: 83px; } .w73 { width: 73px; } .w70 { width: 70px; }
.nav-right { display: flex; padding: 7px 47px 0 0; }
.alert-count { color: #f00; margin: 0 15px 0 9px; line-height: 35px; }
.pill { height: 35px; border: 1px solid #555a75; border-radius: 7px; background: linear-gradient(#eceef6, #7c87b8); color: #fff; font: bold 12px/13px "Liberation Sans", sans-serif; letter-spacing: .2px; text-shadow: 1px 1px 1px #444; padding-bottom: 2px; }
.create { width: 63px; margin-right: 9px; }
.planning { width: 82px; }

/* workspace */
.workspace { position: relative; height: 800px; background: #51493e; display: flex; padding-left: 89px; }
.map { position: relative; width: 1219px; height: 650px; margin-top: 60px; border: 3px solid #008000; overflow: hidden; }
.map-canvas { display: block; }
.city text { font-family: Roboto, sans-serif; fill: #3e3e44; stroke: #fff; stroke-opacity: .75; stroke-width: 2px; paint-order: stroke; }
.state text { font-family: Roboto, sans-serif; font-weight: 700; fill: #222226; stroke: #fff; stroke-opacity: .75; stroke-width: 2px; paint-order: stroke; }
.park { font-family: Roboto, sans-serif; fill: #62894f; }
.park.num { fill: #222; font-weight: 700; }
.route text { font: 700 8.5px Roboto, sans-serif; fill: #fff; text-anchor: middle; }
.logo { filter: drop-shadow(0 0 1px #666); }
.logo text { font: 700 16px "Open Sans", sans-serif; fill: #fff; }
.vendors { position: absolute; left: 40px; top: 4px; width: 150px; display: flex; flex-direction: column; }
.vendors button { height: 25px; border: 1px solid #999; background: linear-gradient(#fff, #ededed); font-size: 15px; line-height: 23px; color: #333; padding-top: 2px; }
.popup { position: absolute; left: 47px; top: 209px; width: 151px; height: 178px; padding: 10px 5px; background: #fff; border-radius: 2px; display: flex; flex-direction: column; text-align: center; font: 11.5px/20px "Open Sans", sans-serif; letter-spacing: .08px; color: #505050; box-shadow: 0 1px 2px rgba(0,0,0,.1); }
.popup::after { content: ""; position: absolute; left: 66px; top: 178px; border: 10px solid transparent; border-top-color: #fff; border-bottom: 0; }
.popup strong { white-space: nowrap; font-size: 12px; }
.popup hr { width: 131px; margin: 16px auto 16px; border: 0; border-top: 1px solid #ddd; }
.popup a { color: #1e88e5; }
.popup-close { position: absolute; right: 6px; top: 0; }
.attribution { position: absolute; right: 0; bottom: 0; height: 20px; padding: 0 5px; background: rgba(255,255,255,.5); font: 12px/20px "Liberation Sans", sans-serif; color: #334; letter-spacing: .45px; -webkit-text-stroke: .25px #334; }

/* layer panel */
.layers { width: 370px; height: 600px; margin: 66px 0 0 53px; display: flex; background: #d3d3d3; overflow: hidden; font: 12px "Liberation Mono", monospace; color: #222; }
.layer-list { width: 344px; margin-left: 3px; }
.layer { height: 116px; border: 3px solid; border-color: #9a9a9a #eee #eee #9a9a9a; background: #ddd; }
.layer.first { padding-top: 76px; }
.layer.rest { height: 300px; }
.layer-head { height: 29px; background: #f0f8ff; margin-bottom: 9px; border-top: 1px solid #e6e6e6; display: flex; align-items: center; padding-left: 13px; line-height: 12px; padding-bottom: 2px; }
.layer-head a { color: #1677ff; margin: 0 8px 0 19px; }
.swatch { width: 20px; height: 21px; border-radius: 5px; background: #ffb3b3; margin-right: 5px; }
.check { position: relative; width: 15px; height: 15px; border: 1px solid #888; border-radius: 2px; background: linear-gradient(#f2f2f2, #ddd); display: inline-block; }
.check::after { content: ""; position: absolute; left: 4px; top: 0; width: 4px; height: 8px; border: solid #3c3c3c; border-width: 0 2.5px 2.5px 0; transform: rotate(42deg); }
.check.off { width: 12px; height: 12px; margin-right: 8px; vertical-align: 4px; opacity: .55; border-color: #999; }
.check.off::after { left: 3px; top: 0; width: 3px; height: 6px; }
.expand { width: 22px; height: 23px; margin: 3px 0 0 auto; border: 2px solid; border-color: #eee #999 #999 #eee; display: flex; justify-content: center; align-items: center; padding-bottom: 4px; }
.layer p { height: 19px; line-height: 23px; padding-left: 7px; white-space: nowrap; }
.layer-scroll { margin-left: auto; width: 17px; background: #f1f1f1; display: flex; flex-direction: column; align-items: center; justify-content: space-between; padding-bottom: 7px; }
.thumb { width: 13px; height: 375px; background: #c1c1c1; }

/* plan dialog */
.modal { position: absolute; left: 779px; top: 14px; width: 471px; height: 772px; }
.modal-head { height: 171px; border: 3px solid #000; border-bottom: 0; border-radius: 5px; background: #fff; text-align: center; display: flex; flex-direction: column; padding-left: 17px; }
.plan-no { margin: 15px 19px 0 0; line-height: 19px; letter-spacing: .15px; }
.modal-head h1 { margin: 18px 16px 0 0; font-size: 34px; line-height: 50px; font-weight: 500; white-space: nowrap; font-family: "Open Sans", sans-serif; color: #212529; -webkit-text-stroke: .6px #212529; }
.actions { display: flex; width: 432px; height: 39px; margin-top: 19px; border: 1px solid #cfd2d4; border-right: 0; border-bottom-color: #dce0e5; background: linear-gradient(#dce0e5 0, #fff 35%, #fff 65%, #dce0e5 100%); color: #5f5f5f; line-height: 36px; letter-spacing: .15px; }
.actions span { border-right: 1px solid #777; }
.actions .a1 { width: 75px; } .actions .a2 { width: 58px; } .actions .a3 { width: 54px; } .actions .a4 { width: 64px; }
.actions .a5 { width: 63px; background: #e3e3e3; line-height: 38px; } .actions .a6 { width: 70px; border: 0; line-height: 38px; }
.modal-body { height: 600px; border: 3px solid #000; border-right-width: 1px; background: #fdfdfd; display: flex; box-shadow: 0 2px #827c80; }
.form-wrap { flex: 1; padding: 14px 0 0 22px; }
.body-scroll, .list-scroll { width: 17px; background: #f0f0f0; display: flex; flex-direction: column; align-items: center; justify-content: space-between; padding: 6px 0 7px; }
table { width: 411px; border-collapse: collapse; table-layout: fixed; background: #d3d3d3; }
th, td { border: 1px solid #dee2e6; vertical-align: top; padding: 10px 0 0 11px; }
tr { height: 47px; } .r48 { height: 48px; } .r52 { height: 52px; }
th { width: 162px; text-align: left; font-weight: 700; line-height: 22px; }
.field { width: 173px; height: 26px; border: 1px solid #a5a5a5; background: #fff; padding-left: 1px; line-height: 25px; color: #222; letter-spacing: .22px; }
.date { letter-spacing: .4px; }
.disabled { background: #ebebe4; color: #707070; }
.listbox { width: 203px; height: 26px; border: 1px solid #a9a9a9; border-right: 0; display: flex; background: #fff; color: #606060; letter-spacing: .2px; }
.listbox span { flex: 1; height: 21px; line-height: 22px; background: #c8c8c8; padding-left: 2px; }
.list-scroll { padding: 4px 0; }
.multi { width: 135px; height: 30px; border: 1px solid #f8f8f8; border-radius: 6px; text-align: center; line-height: 34px; letter-spacing: .15px; }
.multi .caret { margin-left: 3px; }

/* notifications */
.toasts { position: absolute; left: 1305px; top: 19px; width: 431px; display: flex; flex-direction: column; gap: 3px; }
.toast { height: 134px; border: 1px solid #777; border-radius: 13px; background: #ffe07a; display: flex; padding-left: 13px; }
.toast-id { width: 103px; height: 120px; background: #fff; display: flex; flex-direction: column; align-items: center; padding-top: 27px; line-height: 20px; }
.toast-id b { width: 71px; height: 24px; margin-top: 1px; border: 1px solid #666; font-weight: 400; text-align: center; line-height: 23px; }
.toast-text { width: 284px; text-align: center; color: #333; letter-spacing: .22px; }
.toast-title { width: 231px; height: 18px; margin: 10px 0 0 25px; background: #fff; line-height: 21px; }
.toast p { margin-top: 14px; line-height: 21px; white-space: nowrap; padding-top: 6px; }
```
